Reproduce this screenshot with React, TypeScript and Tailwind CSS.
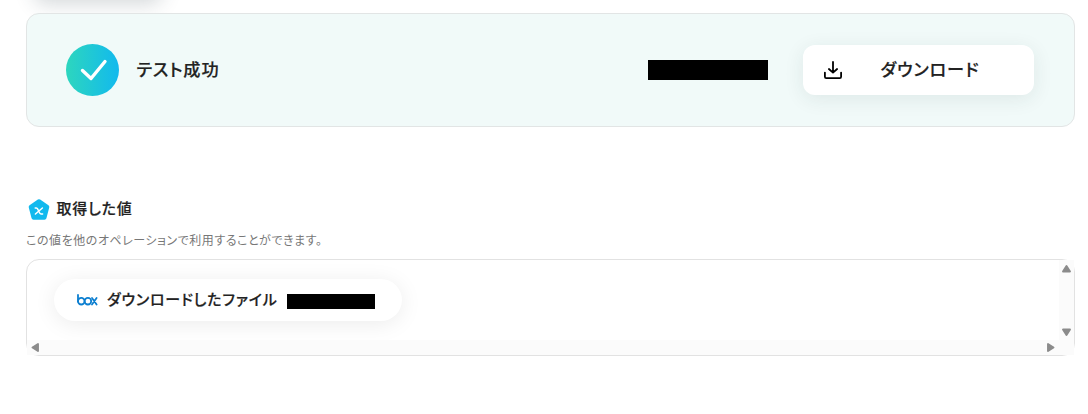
const FONT = "font-['Noto_Sans_CJK_JP',sans-serif] [font-feature-settings:'palt']";
const LABEL = "whitespace-nowrap font-medium leading-6 [-webkit-text-stroke:0.2px_#222]";

function SuccessIcon() {
  return (
    <svg width="53" height="53" viewBox="0 0 53 53" className="shrink-0">
      <defs>
        <linearGradient id="success" x1="0" y1="0" x2="1" y2="0">
          <stop offset="0" stopColor="#2dd6be" />
          <stop offset="1" stopColor="#12b9ee" />
        </linearGradient>
      </defs>
      <ellipse cx="26.5" cy="26" rx="26.5" ry="26" fill="url(#success)" />
      <path d="M16.5 26.5 25 34.5 39 17.5" fill="none" stroke="#fff" strokeWidth="3.4" strokeLinecap="round" strokeLinejoin="round" />
    </svg>
  );
}

function DownloadIcon() {
  return (
    <svg width="20" height="20" viewBox="0 0 20 20" fill="none" stroke="#000" strokeWidth="1.8" strokeLinecap="round" strokeLinejoin="round">
      <path d="M10 1.9V12M5.9 9 10 12.6 14.1 9" />
      <path d="M1.9 12.6v4.1a1.4 1.4 0 0 0 1.4 1.4h13.4a1.4 1.4 0 0 0 1.4-1.4v-4.1" />
    </svg>
  );
}

function ValueIcon() {
  return (
    <svg width="22" height="24" viewBox="0 0 22 24" className="shrink-0">
      <path d="M11 4.2 19.3 10 16.5 20.8H5.5L2.7 10Z" fill="#12b9ee" stroke="#12b9ee" strokeWidth="4" strokeLinejoin="round" />
      <path d="M7.2 11H8.4C10.6 11 10.8 17 13 17H14.6M14.4 11 7.4 17" fill="none" stroke="#fff" strokeWidth="1.5" strokeLinecap="round" />
    </svg>
  );
}

function BoxLogo() {
  return (
    <svg width="21" height="12" viewBox="0 0 21 12" className="-mt-px shrink-0" fill="none" stroke="#0d7fd0" strokeWidth="1.8" strokeLinecap="round">
      <path d="M1 1v6.5" />
      <circle cx="4.3" cy="7.2" r="3.3" />
      <circle cx="10.9" cy="7.2" r="3.3" />
      <path d="M15 4 19.6 10.5M19.6 4 15 10.5" />
    </svg>
  );
}

const ARROWS = {
  up: "M5.5 2 9 7.5H2Z",
  down: "M2 2.5h7L5.5 8Z",
  left: "M2.5 5.5 8 2v7Z",
  right: "M3 2v7l5.5-3.5Z",
};

function Arrow({ dir }: { dir: keyof typeof ARROWS }) {
  return (
    <svg width="11" height="11" viewBox="0 0 11 11" className="shrink-0">
      <path d={ARROWS[dir]} fill="#8b8b8b" stroke="#8b8b8b" strokeWidth="1.9" strokeLinejoin="round" />
    </svg>
  );
}

export default function App() {
  return (
    <div className={`h-[414px] w-[1088px] overflow-hidden bg-white pl-[26px] pr-[13px] text-[#222] ${FONT}`}>
      <div className="-mt-[50px] ml-[8px] h-[50px] w-[128px] rounded-xl shadow-[0_4px_20px_rgba(40,60,70,0.2)]" />

      <section className="mt-[13px] flex h-[114px] items-center rounded-[13px] border border-[#e2e5e5] bg-[#f1faf9] pl-[39px] pr-[40px]">
        <SuccessIcon />
        <h2 className={`-mt-[2px] ml-[17.5px] text-[17.2px] tracking-[0.05em] ${LABEL}`}>テスト成功</h2>
        <div className="ml-auto h-5 w-[120px] bg-black" />
        <button className="ml-[35px] flex h-[50px] w-[231px] items-center rounded-xl bg-white pl-5 shadow-[0_4px_20px_rgba(30,60,55,0.09)]">
          <DownloadIcon />
          <span className={`-mt-[2px] ml-[37.5px] text-[17.2px] tracking-[0.05em] ${LABEL}`}>ダウンロード</span>
        </button>
      </section>

      <section className="mt-[70px]">
        <div className="flex h-6 items-center pl-[2px]">
          <ValueIcon />
          <h3 className={`-mt-[2px] ml-[6.5px] text-[15px] tracking-[0.055em] ${LABEL}`}>取得した値</h3>
        </div>
        <p className="mt-[10px] text-[12px] leading-[18px] tracking-[0.045em] text-[#777]">この値を他のオペレーションで利用することができます。</p>

        <div className="mt-[10px] grid h-[97px] grid-cols-[1fr_15px] grid-rows-[1fr_15px] rounded-[13px] border border-[#e2e2e2]">
          <div className="overflow-hidden rounded-tl-xl pl-[27px] pt-[19px]">
            <div className="flex h-[42px] w-[348px] items-center rounded-full bg-white pl-[23px] shadow-[0_3px_22px_rgba(0,0,0,0.08)]">
              <BoxLogo />
              <span className={`-mt-[2px] ml-[9px] w-[171px] text-[15px] tracking-[0.055em] ${LABEL}`}>ダウンロードしたファイル</span>
              <div className="ml-[9px] mt-[3px] h-[15px] w-[88px] bg-black" />
            </div>
          </div>
          <div className="flex flex-col items-center justify-between bg-[#fbfbfb] pb-[2px] pt-1">
            <Arrow dir="up" />
            <Arrow dir="down" />
          </div>
          <div className="flex items-center justify-between bg-[#fbfbfb] pl-[3px] pr-[3px]">
            <Arrow dir="left" />
            <Arrow dir="right" />
          </div>
          <div className="bg-[#fbfbfb]" />
        </div>
      </section>
    </div>
  );
}
